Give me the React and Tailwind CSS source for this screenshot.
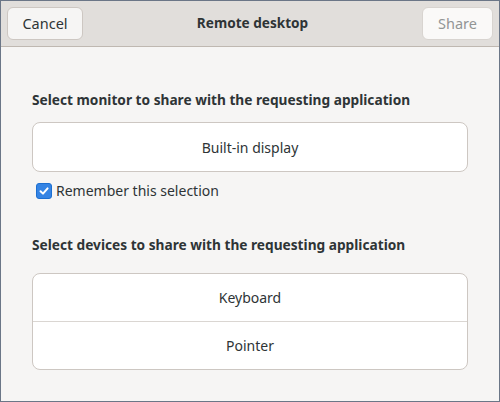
import React from "react";

export default function App() {
  return (
    <div
      className="w-[500px] h-[402px] border border-[#6b7687] bg-[#f6f5f4] flex flex-col text-[#2e3436] overflow-hidden"
      style={{ fontFamily: '"Noto Sans", "DejaVu Sans", sans-serif' }}
    >
      <div className="h-[46px] shrink-0 bg-[#e1dedb] border-b border-[#bfb8b1] flex items-center justify-between px-[6px]">
        <button className="h-[33px] w-[76px] rounded-[6px] border border-[#cdc7c2] bg-[#f6f5f4] text-[14.5px] text-[#2e3436]">
          Cancel
        </button>
        <div className="text-[13.6px] font-bold">Remote desktop</div>
        <button className="h-[33px] w-[71px] rounded-[6px] border border-[#d8d4d0] bg-[#faf9f8] text-[14.5px] text-[#929595]">
          Share
        </button>
      </div>
      <div className="flex flex-col px-[31px] pt-[43px]">
        <div className="text-[13.7px] font-bold leading-[20px]">
          Select monitor to share with the requesting application
        </div>
        <div className="mt-[12px] h-[50px] rounded-[8px] border border-[#cdc7c2] bg-white flex items-center justify-center text-[14px]">
          Built-in display
        </div>
        <label className="mt-[10px] flex items-center gap-[4px] pl-[4px] text-[14px] leading-[18px]">
          <span className="w-[16px] h-[16px] rounded-[3px] bg-[#3584e4] border border-[#1c6fd1] flex items-center justify-center">
            <svg width="12" height="12" viewBox="0 0 12 12">
              <path d="M2.5 6.2 L5 8.6 L9.6 3.4" stroke="white" strokeWidth="2" fill="none" strokeLinecap="round" strokeLinejoin="round" />
            </svg>
          </span>
          Remember this selection
        </label>
        <div className="mt-[35px] text-[13.7px] font-bold leading-[20px]">
          Select devices to share with the requesting application
        </div>
        <div className="mt-[18px] rounded-[8px] border border-[#cdc7c2] bg-white flex flex-col text-[14px]">
          <div className="h-[48px] flex items-center justify-center border-b border-[#dad6d2]">Keyboard</div>
          <div className="h-[47px] flex items-center justify-center">Pointer</div>
        </div>
      </div>
    </div>
  );
}
